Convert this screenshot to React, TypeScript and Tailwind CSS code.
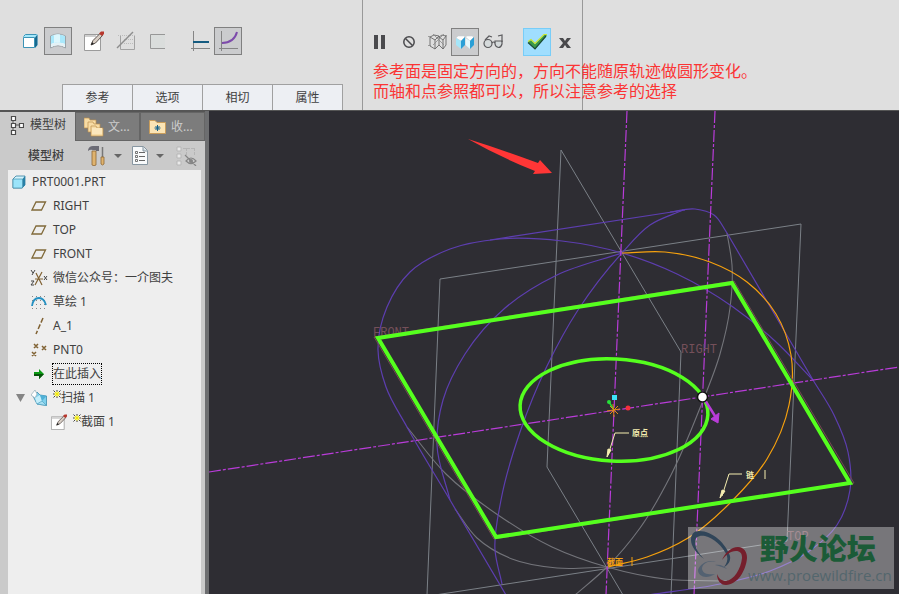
import type { ReactNode } from "react";
import clsx from "clsx";

type Point = [number, number];

// Smooth curve through a list of points, tangents weighted by chord length
function curve(points: Point[]) {
  const dist = (a: Point, b: Point) => Math.hypot(b[0] - a[0], b[1] - a[1]);
  const last = points.length - 1;
  const tangents = points.map((p, i): Point => {
    if (i === 0 || i === last) {
      const [a, b] = i === 0 ? [p, points[1]] : [points[last - 1], p];
      const d = dist(a, b);
      return [(b[0] - a[0]) / d, (b[1] - a[1]) / d];
    }
    const prev = points[i - 1];
    const next = points[i + 1];
    const d1 = dist(prev, p);
    const d2 = dist(p, next);
    const axis = (k: 0 | 1) => (((p[k] - prev[k]) / d1) * d2 + ((next[k] - p[k]) / d2) * d1) / (d1 + d2);
    return [axis(0), axis(1)];
  });
  let d = `M${points[0][0]} ${points[0][1]}`;
  for (let i = 0; i < last; i++) {
    const [a, b, m, n] = [points[i], points[i + 1], tangents[i], tangents[i + 1]];
    const s = dist(a, b) / 3;
    d += ` C${a[0] + m[0] * s} ${a[1] + m[1] * s} ${b[0] - n[0] * s} ${b[1] - n[1] * s} ${b[0]} ${b[1]}`;
  }
  return d;
}

const purpleCurves: Point[][] = [
  [[450, 500], [407, 427], [386, 387], [378, 350], [387, 307], [410, 272], [450, 249], [500, 239], [562, 241], [622, 253], [677, 274], [733, 307], [775, 341], [813, 380]],
  [[683, 210], [650, 225], [622, 253], [578, 310], [547, 366], [520, 432], [501, 500], [495, 550], [502, 584]],
  [[622, 253], [557, 275], [505, 308], [465, 354], [443, 400], [437, 445], [450, 500]],
  [[670, 212], [695, 209], [714, 215], [727, 233]],
  [[813, 380], [834, 415], [848, 452], [850, 490], [837, 525], [808, 552], [770, 571], [720, 584], [648, 595]],
];

const hiddenCurves: Point[][] = [
  [[727, 233], [732, 265], [730, 308], [720, 354], [700, 408], [671, 475], [640, 528], [607, 567], [575, 595]],
  [[407, 427], [446, 474], [498, 515], [552, 547], [607, 567], [665, 579], [727, 581]],
  [[455, 509], [477, 538], [512, 559], [557, 568], [607, 567]],
];

const orangeCurve: Point[] = [[622, 253], [665, 252], [710, 262], [747, 282], [776, 314], [791, 355], [789, 405], [767, 459], [733, 500], [688, 538], [647, 557], [608, 567]];

function Icon({ w = 20, h = 20, children }: { w?: number; h?: number; children: ReactNode }) {
  return (
    <svg width={w} height={h} viewBox={`0 0 ${w} ${h}`} fill="none" className="shrink-0" aria-hidden="true">
      {children}
    </svg>
  );
}

const CubeIcon = () => (
  <Icon w={16} h={16}>
    <path d="M1 4 3 1H15.500V12L13 15H1Z" fill="#a5e8fb" />
    <path d="M13 4.500V15L15.500 12V1.500Z" fill="#17698f" />
    <path d="M1.500 3.500 3.500 1.500H14.500" stroke="#3c93b5" />
    <path d="M1.500 4.500H12.500V14.500H1.500Z" fill="#fff" stroke="#3c93b5" />
  </Icon>
);

const SurfaceIcon = () => (
  <Icon>
    <path d="M2.500 5Q10 1 17.500 5V17Q10 12.500 2.500 17Z" fill="#fff" stroke="#9aa3a8" />
    <path d="M3 5Q10 2 17 5V13Q10 10 3 13Z" fill="#a9e8fb" />
    <path d="M6 4Q9 3 12 3.500V11.500Q9 11 6 12Z" fill="#ddf7fd" />
    <path d="M3 13Q10 10 17 13V16Q10 12 3 16Z" fill="#e4f2f6" />
  </Icon>
);

const SketchIcon = ({ size = 20 }: { size?: number }) => (
  <svg width={size} height={size} viewBox="0 0 20 20" fill="none" aria-hidden="true">
    <path d="M.5 3.500H16.500V19.500H.5Z" fill="#fff" stroke="#9b9b9b" />
    <path d="M1 4H12V6H1Z" fill="#cfcfcf" />
    <path d="M7 14 9 9.500 16 2.500 18.500 4.500 11.500 12Z" fill="#d9cfc6" stroke="#5a514c" />
    <path d="M7 14 8 11 10 13Z" fill="#222" />
    <path d="M15 2.500 17 .5 20 .5 20 3 18 5Z" fill="#b8372d" />
  </svg>
);

const ThinIcon = () => (
  <Icon>
    <path d="M4.500 5V18.500H18.500V4.500" stroke="#a3a3a3" />
    <path d="M2 4.500H17M8 8.500H17M8 12.500H17" stroke="#bcbcbc" strokeDasharray="1 1" />
    <path d="M1 17 17 1" stroke="#8e8e8e" strokeWidth="1.500" />
  </Icon>
);

const OpenBoxIcon = () => (
  <Icon>
    <path d="M17 3.500H2.500V17.500H17" fill="#dadddc" stroke="#979797" />
  </Icon>
);

const ConstantIcon = () => (
  <Icon>
    <path d="M3.500 0V20M1 17.500H20" stroke="#858585" />
    <path d="M3 11H19" stroke="#155b80" strokeWidth="2" />
  </Icon>
);

const VariableIcon = () => (
  <Icon>
    <path d="M3.500 0V20M1 17.500H20" stroke="#858585" />
    <path d="M4 12Q16 12 19 1" stroke="#7d4bab" strokeWidth="2" />
  </Icon>
);

const PauseIcon = () => (
  <Icon w={12} h={14}>
    <path d="M1 0H5V14H1ZM8 0H12V14H8Z" fill="#4a4a4d" />
  </Icon>
);

const NoneIcon = () => (
  <Icon w={14} h={14}>
    <circle cx="7" cy="7" r="5.200" stroke="#4a4a4d" strokeWidth="1.500" />
    <path d="M3.500 3.500 10.500 10.500" stroke="#4a4a4d" strokeWidth="1.500" />
  </Icon>
);

const WireIcon = () => (
  <Icon>
    <path d="M3 5 8 8V17L3 14ZM8 8 12 4V13L8 17M3 5 7 3 12 4M12 5 16 8V17L12 13M16 8 19 4V13L16 17M12 5 15 3 19 4" stroke="#6a6a6a" strokeWidth=".9" />
    <path d="M1 4.500H4M17 3.500H20M1 13.500H4M6 2 17 13M6 13 17 2" stroke="#8a8a8a" strokeWidth=".8" />
  </Icon>
);

const PreviewIcon = () => (
  <Icon>
    <path d="M1 6 3 4H9L10 5 6 9Z" fill="#fff" stroke="#c3cdd1" strokeWidth=".5" />
    <path d="M1 6 6 9V17L1 13Z" fill="#a5e6f9" />
    <path d="M6 9 10 5V13L6 17Z" fill="#2a9fd6" />
    <path d="M10.500 5 12 4H17L19 5 15 9Z" fill="#fff" stroke="#c3cdd1" strokeWidth=".5" />
    <path d="M10.500 6 15 9V17L10.500 13Z" fill="#e3f8fd" />
    <path d="M15 9 19 5V13L15 17Z" fill="#2a9fd6" />
  </Icon>
);

const GlassesIcon = () => (
  <Icon>
    <circle cx="5" cy="11.500" r="4" fill="#d5dadb" stroke="#5a5a5d" strokeWidth="1.200" />
    <path d="M12 9H19V12Q18 15.500 15.500 15.500 12.500 15 12 12Z" fill="#d5dadb" stroke="#5a5a5d" strokeWidth="1.200" />
    <path d="M9 11Q10.500 9 12 11M2 8 6 4 9 5M19 10V3L15 4" stroke="#5a5a5d" strokeWidth="1.200" />
  </Icon>
);

const CheckIcon = () => (
  <Icon>
    <path d="M1 10 4 8 8 12 17 3 20 3 8 17Z" fill="#3b9a4b" />
    <path d="M1 9.500 4 7.500 8 11.500 17 2.500 20 2.500" stroke="#cbe531" strokeWidth="1.200" />
    <path d="M1 10.500 8 17 19 4" stroke="#1b4a35" strokeWidth="1.200" />
  </Icon>
);

const CancelIcon = () => (
  <Icon w={12} h={12}>
    <path d="M0 2H4L6 5 8 2H12L8 7 12 12H8L6 9 4 12H0L4 7Z" fill="#4a4a4d" />
  </Icon>
);

const TreeIcon = () => (
  <Icon w={14} h={20}>
    <path d="M3 3V17M3 10H10" stroke="#555" />
    <path d="M1.500 1.500H5.500V5.500H1.500ZM1.500 8.500H5.500V12.500H1.500ZM1.500 15.500H5.500V19.500H1.500ZM9.500 8.500H13.500V12.500H9.500Z" fill="#fff" stroke="#4b4b4b" strokeWidth="1.200" />
  </Icon>
);

const FoldersIcon = () => (
  <Icon>
    {[0, 4, 7].map((n, i) => (
      <path key={n} d={`M${n} ${1 + i * 4}H${n + 5}L${n + 6} ${3 + i * 4}H${n + 12}V${11 + i * 4}H${n}Z`} fill="#f7dca5" stroke="#bb904d" strokeWidth=".7" />
    ))}
    <path d="M8 11H18V17H8Z" fill="#fbe7bd" />
  </Icon>
);

const FavoriteIcon = () => (
  <Icon w={18} h={16}>
    <path d="M.5 1.500H6L8 3.500H16.500V14.500H.5Z" fill="#fbe4b5" stroke="#c99d5b" />
    <path d="M8.500 6V12M5.500 9H11.500M6.500 7 10.500 11M10.500 7 6.500 11" stroke="#15618a" />
  </Icon>
);

const ToolsIcon = () => (
  <Icon w={18} h={20}>
    <path d="M0 4Q1 0 5 0H11V5H8V4H5Q2 3 0 5Z" fill="#6b6b75" />
    <path d="M4 5H8V19Q6 20.500 4 19Z" fill="#dfb36e" stroke="#8d6736" strokeWidth=".8" />
    <path d="M14.500 1V12" stroke="#777" strokeWidth="1.500" />
    <path d="M13 11H16V18Q14.500 20 13 18Z" fill="#dfb36e" stroke="#8d6736" strokeWidth=".8" />
  </Icon>
);

const ListIcon = () => (
  <Icon w={16} h={19}>
    <path d="M.5.5H11.500L15.500 4.500V18.500H.5Z" fill="#f8fafb" stroke="#8796a1" />
    <path d="M11 1V5H15" fill="#d5dfe5" stroke="#8796a1" />
    <path d="M7 6.500H13M7 10.500H13M7 14.500H13" stroke="#666" />
    <path d="M3.500 5.500H5.500V7.500H3.500ZM3.500 9.500H5.500V11.500H3.500ZM3.500 13.500H5.500V15.500H3.500Z" stroke="#555" strokeWidth=".8" />
  </Icon>
);

const HiddenIcon = () => (
  <Icon w={22} h={20}>
    <path d="M1 1H5V5H1ZM1 8H5V12H1ZM1 15H5V19H1Z" fill="#e9e9e9" stroke="#b7b7b7" />
    <path d="M7 2.500H19M10.500 2V10M18.500 2V10" stroke="#b5b5b5" strokeDasharray="3 1" />
    <path d="M10 15Q15 9 20 15Q15 20 10 15ZM9 9 20 20" stroke="#858585" strokeWidth="1.200" />
    <circle cx="15" cy="15" r="2" fill="#858585" />
  </Icon>
);

const DownIcon = () => (
  <Icon w={8} h={4}>
    <path d="M0 0H8L4 4Z" fill="#666" />
  </Icon>
);

const PartIcon = () => (
  <Icon w={14} h={14}>
    <path d="M1 4 4 1H13V10L10 13H1Z" fill="#d3f4fd" stroke="#327f9f" strokeWidth=".8" />
    <path d="M10.500 4 13 1V10L10.500 13Z" fill="#2780a6" />
    <path d="M1 4H10.500V13H1Z" fill="#9be4fa" stroke="#327f9f" strokeWidth=".6" />
  </Icon>
);

const PlaneIcon = () => (
  <Icon w={16} h={10}>
    <path d="M5 1H14.500L10.500 9H1Z" stroke="#806a3a" strokeWidth="1.300" />
  </Icon>
);

const CsysIcon = () => (
  <Icon w={18} h={18}>
    <path d="M5 10H13M6 4 12 16M12 3 5 16" stroke="#806233" strokeWidth="1.200" />
    <path d="M1 1 3 4M5 1 2 6M1 12H4L1 16H4M14 7 17 11M17 7 14 11" stroke="#444" />
  </Icon>
);

const CurveIcon = () => (
  <Icon w={16} h={14}>
    <path d="M1 1.500H16M1 5.500H16M1 9.500H16M1 13.500H16" stroke="#888" strokeDasharray="1 3" />
    <path d="M1 11Q2 3 8 3Q13 3 15 10" stroke="#2490c2" strokeWidth="1.800" />
  </Icon>
);

const AxisIcon = () => (
  <Icon w={16} h={18}>
    <path d="M12 1 5 17" stroke="#806233" strokeWidth="1.500" strokeDasharray="5 2" />
  </Icon>
);

const PointIcon = () => (
  <Icon w={18} h={14}>
    <path d="M4 1 8 5M8 1 4 5M12 3 16 7M16 3 12 7M2 9 6 13M6 9 2 13" stroke="#806233" strokeWidth="1.500" />
  </Icon>
);

const InsertIcon = () => (
  <Icon w={12} h={12}>
    <path d="M1 4H6V1L11 6 6 11V8H1Z" fill="#0a9a13" />
    <path d="M1 6H11L6 11V8H1Z" fill="#07500b" />
  </Icon>
);

const SweepIcon = () => (
  <Icon w={16} h={16}>
    <path d="M2 6 6 2 9 5 15.500 6V15.500L6 14Z" fill="#7fd0ec" stroke="#3b8cad" strokeWidth=".8" />
    <path d="M0 5 4 0 6 4 4 8Z" fill="#fff" stroke="#9db4be" strokeWidth=".8" />
    <path d="M4 8 9 5 11 11 6 14Z" fill="#c5eefa" />
    <path d="M9 5 15.500 6 11 11Z" fill="#4fb0d6" />
    <path d="M11 11 15.500 15.500 6 14Z" fill="#a4def2" stroke="#469bbb" strokeWidth=".6" />
  </Icon>
);

const StarIcon = () => (
  <Icon w={8} h={8}>
    <path d="M4 1V7M1 4H7M2 2 6 6M6 2 2 6" stroke="#f5ec00" />
    <path d="M4 0V1.500M4 6.500V8M0 4H1.500M6.500 4H8M.5.5 2 2M6 6 7.500 7.500M7.500.5 6 2M2 6 .5 7.500" stroke="#444" />
  </Icon>
);

function ToolButton({ label, active, confirm, disabled, children }: { label: string; active?: boolean; confirm?: boolean; disabled?: boolean; children: ReactNode }) {
  return (
    <button
      type="button"
      aria-label={label}
      disabled={disabled}
      className={clsx("flex size-7 shrink-0 items-center justify-center border", active ? "border-[#808080] bg-[#cbccce]" : confirm ? "border-[#78cdf8] bg-[#a0defe]" : "border-transparent")}
    >
      {children}
    </button>
  );
}

type Item = { name: string; icon: ReactNode; star?: boolean; current?: boolean };

const features: Item[] = [
  { name: "RIGHT", icon: <PlaneIcon /> },
  { name: "TOP", icon: <PlaneIcon /> },
  { name: "FRONT", icon: <PlaneIcon /> },
  { name: "微信公众号：一介图夫", icon: <CsysIcon /> },
  { name: "草绘 1", icon: <CurveIcon /> },
  { name: "A_1", icon: <AxisIcon /> },
  { name: "PNT0", icon: <PointIcon /> },
  { name: "在此插入", icon: <InsertIcon />, current: true },
];

function TreeRow({ item }: { item: Item }) {
  return (
    <div className="flex h-6 items-center gap-1">
      <span className="flex w-5 shrink-0 justify-center">{item.icon}</span>
      {item.star && (
        <span className="-mr-1 pb-2">
          <StarIcon />
        </span>
      )}
      <span className={clsx("whitespace-nowrap", item.current && "-m-px border border-dotted border-black leading-5")}>{item.name}</span>
    </div>
  );
}

function Dashboard() {
  return (
    <header className="flex h-[111px] shrink-0 border-b border-[#555] bg-[#dfdfdf]">
      <div className="flex w-[363px] shrink-0 flex-col justify-between border-r border-[#999] pt-[27px]">
        <div className="flex pl-4">
          <ToolButton label="实体"><CubeIcon /></ToolButton>
          <ToolButton label="曲面" active><SurfaceIcon /></ToolButton>
          <div className="ml-2 flex gap-1">
            <ToolButton label="草绘"><SketchIcon /></ToolButton>
            <ToolButton label="移除材料" disabled><ThinIcon /></ToolButton>
            <ToolButton label="加厚" disabled><OpenBoxIcon /></ToolButton>
          </div>
          <div className="ml-3.5 flex">
            <ToolButton label="恒定截面"><ConstantIcon /></ToolButton>
            <ToolButton label="可变截面" active><VariableIcon /></ToolButton>
          </div>
        </div>
        <nav className="ml-[62px] flex">
          {["参考", "选项", "相切", "属性"].map((tab) => (
            <button key={tab} type="button" className="-mr-px h-[26px] w-[71px] border border-b-0 border-[#a0a0a0] bg-[#edeff3]">
              {tab}
            </button>
          ))}
        </nav>
      </div>
      <div className="w-[220px] shrink-0 border-r border-[#999] pt-7">
        <div className="flex pl-0.5">
          <ToolButton label="暂停"><PauseIcon /></ToolButton>
          <div className="ml-0.5 flex">
            <ToolButton label="无预览"><NoneIcon /></ToolButton>
            <ToolButton label="分离预览"><WireIcon /></ToolButton>
            <ToolButton label="连接预览" active><PreviewIcon /></ToolButton>
            <ToolButton label="校验"><GlassesIcon /></ToolButton>
          </div>
          <div className="ml-4 flex">
            <ToolButton label="确定" confirm><CheckIcon /></ToolButton>
            <ToolButton label="取消"><CancelIcon /></ToolButton>
          </div>
        </div>
        <p className="relative z-10 mt-1 ml-2.5 font-['Noto_Sans_CJK_SC',sans-serif] text-base leading-5 whitespace-nowrap text-[#fb3434]">
          参考面是固定方向的，方向不能随原轨迹做圆形变化。
          <br />
          而轴和点参照都可以，所以注意参考的选择
        </p>
      </div>
    </header>
  );
}

function ModelTree() {
  return (
    <aside className="flex w-[209px] shrink-0 flex-col border-r-4 border-[#6d6e70] bg-[#cacaca]">
      <div className="flex h-[30px] bg-[#555] pt-px">
        <button type="button" className="flex w-[75px] items-center gap-1.5 bg-[#cacaca] pb-1 pl-2.5">
          <TreeIcon />
          模型树
        </button>
        <button type="button" className="flex w-[65px] items-center gap-1 border border-[#656565] bg-[#7c7c7c] pl-2 text-[#ccc]">
          <FoldersIcon />
          文...
        </button>
        <button type="button" className="flex w-[65px] items-center gap-1 border border-[#656565] bg-[#7c7c7c] pl-2 text-[#ccc]">
          <FavoriteIcon />
          收...
        </button>
      </div>
      <div className="flex h-[29px] items-center pl-7">
        <h2 className="w-[60px] font-medium">模型树</h2>
        <button type="button" aria-label="设置" className="flex items-center gap-2">
          <ToolsIcon />
          <DownIcon />
        </button>
        <button type="button" aria-label="显示" className="ml-2.5 flex items-center gap-2">
          <ListIcon />
          <DownIcon />
        </button>
        <button type="button" aria-label="隐藏" className="ml-3" disabled>
          <HiddenIcon />
        </button>
      </div>
      <div className="mr-1 ml-2 flex-1 bg-[#eee]">
        <div className="flex h-6 items-center gap-1.5 pl-1">
          <PartIcon />
          <span>PRT0001.PRT</span>
        </div>
        <ul className="pl-[21px]">
          {features.map((item) => (
            <li key={item.name}>
              <TreeRow item={item} />
            </li>
          ))}
        </ul>
        <div className="flex items-center gap-1 pl-2">
          <button type="button" aria-label="折叠">
            <Icon w={9} h={8}>
              <path d="M0 0H9L4.500 8Z" fill="#858585" />
            </Icon>
          </button>
          <TreeRow item={{ name: "扫描 1", icon: <SweepIcon />, star: true }} />
        </div>
        <div className="pl-[41px]">
          <TreeRow item={{ name: "截面 1", icon: <SketchIcon size={16} />, star: true }} />
        </div>
      </div>
    </aside>
  );
}

function Scene() {
  return (
    <svg viewBox="209 111 690 483" preserveAspectRatio="xMinYMin slice" className="size-full" fill="none" aria-label="模型">
      <g stroke="#7b8087">
        <path d="M547 467 561 150 681 352 671 595M547 467 623 595" />
        <path d="M427 595 440 279 801 224 787 541 435 595" />
      </g>
      <g stroke="#73747a" strokeWidth="1.100">
        {hiddenCurves.map((points, i) => (
          <path key={i} d={curve(points)} />
        ))}
      </g>
      <g stroke="#5d3eb0" strokeWidth="1.200">
        {purpleCurves.map((points, i) => (
          <path key={i} d={curve(points)} />
        ))}
        <path d="M490 240 685 210M727 233 813 380M450 500 506 595" />
      </g>
      <g stroke="#b93cd9" strokeWidth="1.200" strokeDasharray="12 2 3 2">
        <path d="M627 111 606 595" />
        <path d="M715 111 694 595" />
        <path d="M209 472 899 367" />
      </g>
      <path d={curve(orangeCurve)} stroke="#f6a10e" strokeWidth="1.200" />

      <g className="font-['Liberation_Mono',monospace] text-[12px]" fill="#75505a">
        <text x="373" y="336">FRONT</text>
        <text x="681" y="353">RIGHT</text>
        <text x="787" y="540">TOP</text>
      </g>

      <path d="M374 337 734 281 854 483 494 539Z" stroke="#744a50" />
      <path d="M378 338 732 283 850 483 496 537Z" stroke="#55ff1e" strokeWidth="4" />
      <ellipse cx="614" cy="410" rx="94" ry="51" transform="rotate(3 614 410)" stroke="#55ff1e" strokeWidth="3.500" />

      <path d="M614 410 609 402" stroke="#25df38" strokeWidth="1.500" />
      <circle cx="609" cy="402" r="2" fill="#25df38" />
      <path d="M612 395H617V400H612Z" fill="#3de5fa" />
      <circle cx="628" cy="408" r="2.500" fill="#f52f3b" />
      <path d="M607 411 620 409M613 404 614 417M610 406 618 414M618 406 610 414" stroke="#e48915" />

      <path d="M703 397 715 416" stroke="#b93cd9" strokeWidth="2.500" />
      <path d="M711 419 719 413 718 423Z" fill="#b93cd9" stroke="#b93cd9" />
      <circle cx="702.500" cy="397" r="5" fill="#fff" stroke="#111" strokeWidth="1.500" />

      <g stroke="#f5eeb0">
        <path d="M629 433H615L608 455M742 474H729L722 496" />
        <path d="M607 457 608 449 611 450ZM720 498 722 490 725 491Z" fill="#f5eeb0" />
        <path d="M765 470V479" />
      </g>
      <g className="font-['Noto_Sans_CJK_SC',sans-serif] text-[8px] font-bold" fill="#f5eeb0">
        <text x="632" y="436">原点</text>
        <text x="746" y="478">链</text>
        <text x="607" y="565" fill="#f6a10e">截面</text>
      </g>
      <path d="M632 557V566" stroke="#f6a10e" />

      <path d="M468 139Q500 149 538 163L540 160 552 173 533 174 535 171Q500 157 468 139Z" fill="#ff3636" />
    </svg>
  );
}

function Watermark() {
  return (
    <div className="absolute right-[5px] bottom-[5px] flex h-[62px] w-[206px] bg-white/35">
      <svg viewBox="0 0 60 62" className="w-[60px] shrink-0" aria-hidden="true">
        <path d="M16 32C8 26 3 19 3 13 3 7 6 4 11 4 25 4 38 17 42 29 43 34 40 38 36 40 39 36 40 33 39 29 35 19 25 11 17 9 11 8 7 10 7 15 7 21 11 27 16 32Z" fill="#304559" />
        <path d="M34 33C37 26 43 20 50 20 56 20 59 25 59 31 58 44 49 58 38 58 32 58 29 53 29 47 31 52 34 54 38 54 46 53 53 42 54 31 54 26 52 24 48 24 42 24 38 28 34 33Z" fill="#751f2c" />
        <path d="M28 35C20 32 12 37 10 43 10 49 18 53 27 47 21 48 15 47 14 42 14 37 20 33 28 35Z" fill="#536171" />
        <path d="M27 38C32 37 36 39 39 42 35 40 31 39 27 38Z" fill="#536171" />
      </svg>
      <div className="flex flex-1 flex-col items-end pr-1">
        <strong className="w-[132px] font-['Noto_Sans_CJK_SC',sans-serif] text-[29px] leading-10 font-black whitespace-nowrap text-[#1b5b37]">野火论坛</strong>
        <span className="font-['Open_Sans',sans-serif] text-[15px] leading-4 whitespace-nowrap text-[#53666d]">www.proewildfire.cn</span>
      </div>
    </div>
  );
}

export default function App() {
  return (
    <div lang="zh-CN" className="flex h-screen flex-col overflow-hidden bg-[#2e2d33] font-['Noto_Sans','Noto_Sans_CJK_SC',sans-serif] text-xs text-[#404040]">
      <Dashboard />
      <div className="flex min-h-0 flex-1">
        <ModelTree />
        <main className="relative min-w-0 flex-1">
          <Scene />
          <Watermark />
        </main>
      </div>
    </div>
  );
}
